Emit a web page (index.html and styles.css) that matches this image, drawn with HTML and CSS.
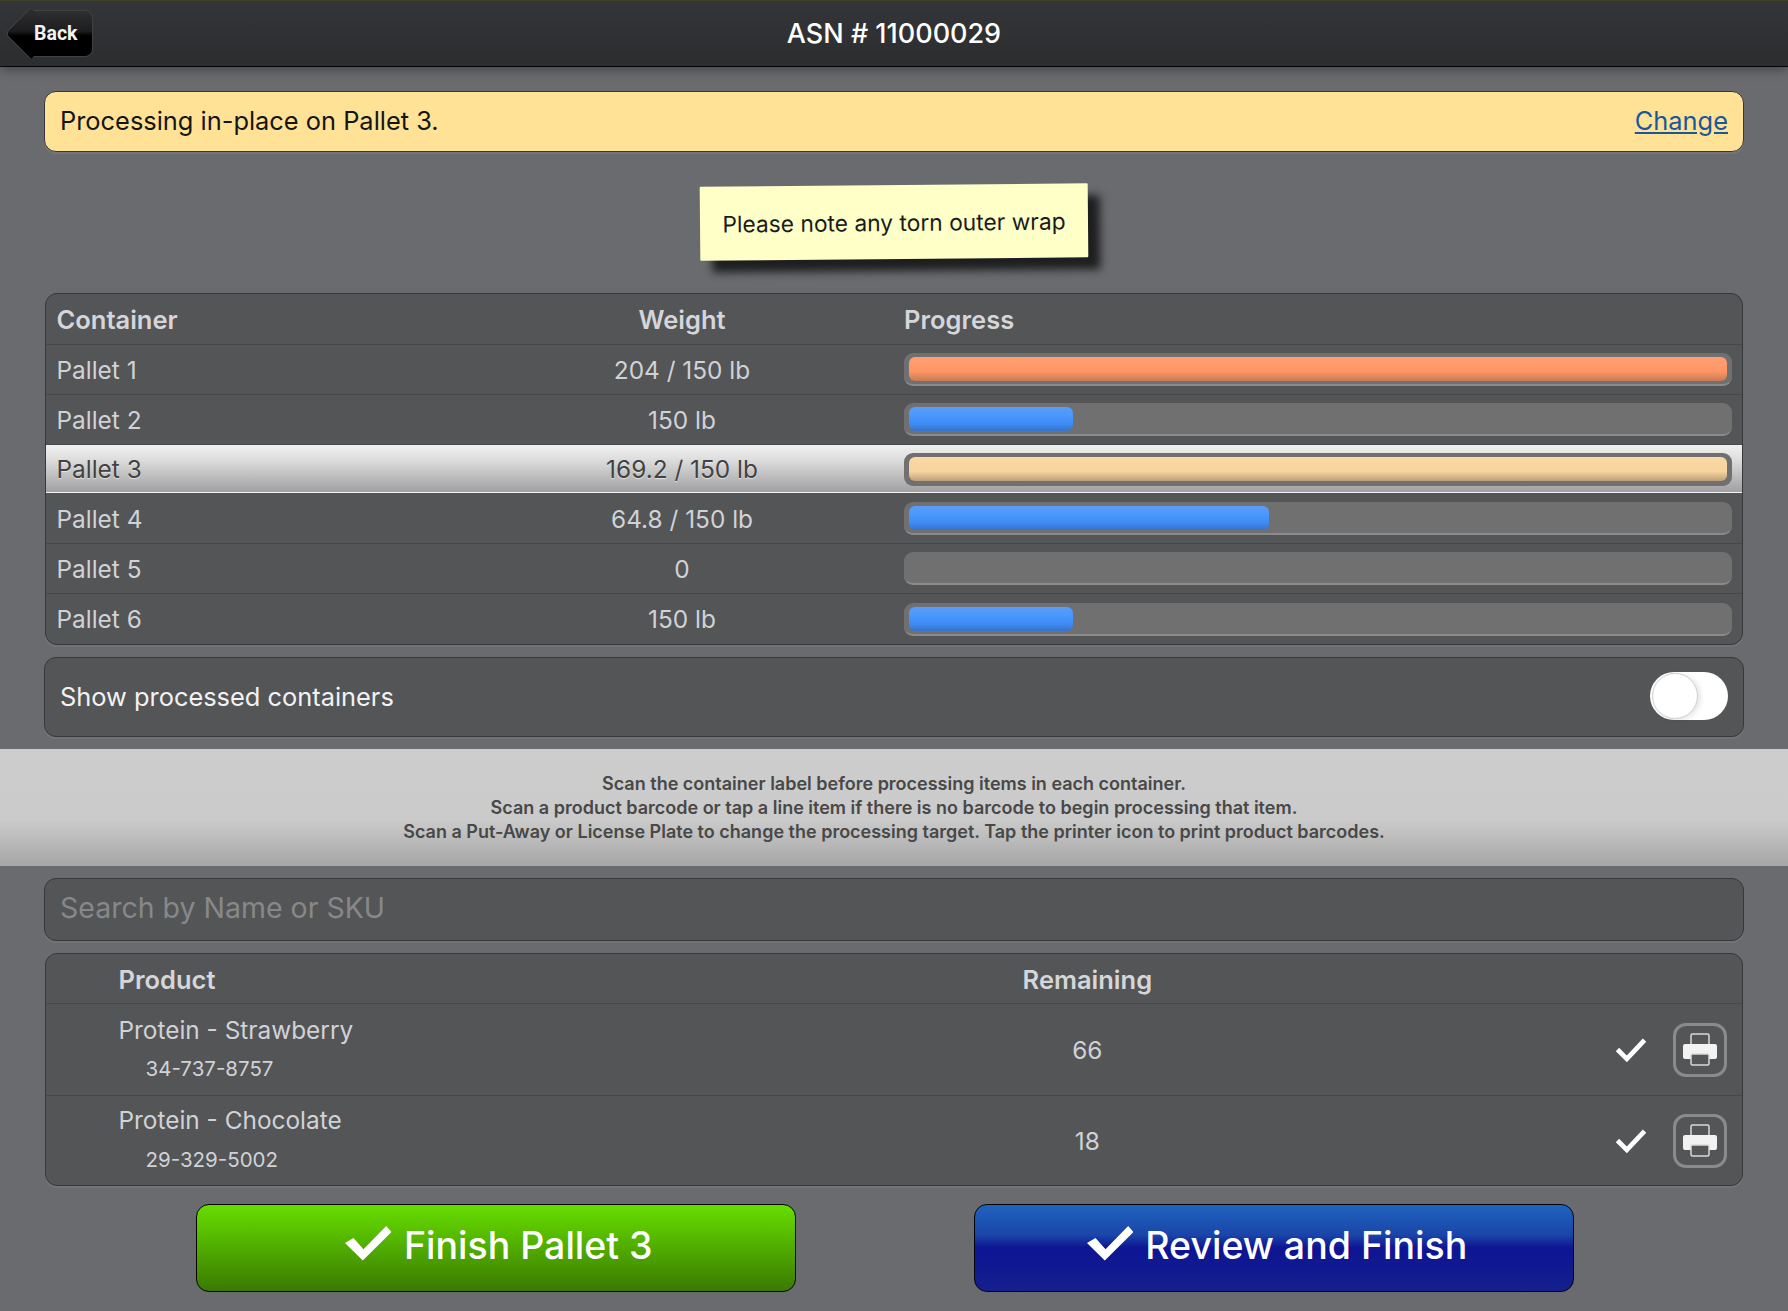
FILE: index.html
```html
<!DOCTYPE html>
<html lang="en">
<head>
<meta charset="utf-8">
<title>ASN # 11000029</title>
<link rel="stylesheet" href="styles.css">
</head>
<body>
<header class="topbar">
  <a class="back" href="#"><span>Back</span></a>
  <h1 class="title">ASN # 11000029</h1>
</header>

<main class="page">
  <div class="panel-wrap">
    <div class="banner">
      <span>Processing in-place on Pallet 3.</span>
      <a class="change" href="#">Change</a>
    </div>
  </div>

  <div class="note-wrap">
    <div class="note">Please note any torn outer wrap</div>
  </div>

  <div class="panel-wrap">
    <section class="table containers">
      <div class="row head"><div>Container</div><div class="center">Weight</div><div>Progress</div></div>
      <div class="row"><div>Pallet 1</div><div class="center">204 / 150 lb</div><div class="track"><div class="fill over" style="width:100%"></div></div></div>
      <div class="row"><div>Pallet 2</div><div class="center">150 lb</div><div class="track"><div class="fill" style="width:20%"></div></div></div>
      <div class="row selected"><div>Pallet 3</div><div class="center">169.2 / 150 lb</div><div class="track"><div class="fill peach" style="width:100%"></div></div></div>
      <div class="row"><div>Pallet 4</div><div class="center">64.8 / 150 lb</div><div class="track"><div class="fill" style="width:44%"></div></div></div>
      <div class="row"><div>Pallet 5</div><div class="center">0</div><div class="track"></div></div>
      <div class="row last"><div>Pallet 6</div><div class="center">150 lb</div><div class="track"><div class="fill" style="width:20%"></div></div></div>
    </section>

    <div class="toggle-card">
      <span>Show processed containers</span>
      <div class="toggle"><div class="knob"></div></div>
    </div>
  </div>

  <div class="info">
    Scan the container label before processing items in each container.<br>
    Scan a product barcode or tap a line item if there is no barcode to begin processing that item.<br>
    Scan a Put-Away or License Plate to change the processing target. Tap the printer icon to print product barcodes.
  </div>

  <div class="panel-wrap">
    <input class="search" type="text" placeholder="Search by Name or SKU">

    <section class="table products">
      <div class="prow head"><div class="pname">Product</div><div class="center">Remaining</div><div></div></div>
      <div class="prow item">
        <div class="pname">Protein - Strawberry<div class="sku">34-737-8757</div></div>
        <div class="center">66</div>
        <div class="actions">
          <svg class="tick" viewBox="0 0 30 24"><path d="M2 12 L11 21 L28 3"/></svg>
          <button class="print" type="button" aria-label="Print">
            <svg viewBox="0 0 34 33"><rect class="paper" x="8" y="1" width="18" height="11" rx="1.5"/><rect class="body" x="0" y="11" width="34" height="15" rx="2"/><rect class="paper tray" x="8" y="21" width="18" height="11" rx="1.5"/></svg>
          </button>
        </div>
      </div>
      <div class="prow item last">
        <div class="pname">Protein - Chocolate<div class="sku">29-329-5002</div></div>
        <div class="center">18</div>
        <div class="actions">
          <svg class="tick" viewBox="0 0 30 24"><path d="M2 12 L11 21 L28 3"/></svg>
          <button class="print" type="button" aria-label="Print">
            <svg viewBox="0 0 34 33"><rect class="paper" x="8" y="1" width="18" height="11" rx="1.5"/><rect class="body" x="0" y="11" width="34" height="15" rx="2"/><rect class="paper tray" x="8" y="21" width="18" height="11" rx="1.5"/></svg>
          </button>
        </div>
      </div>
    </section>
  </div>

  <div class="buttons">
    <button class="cta green" type="button"><svg class="bigtick" viewBox="0 0 46.5 35"><polygon points="0,17 8.5,12 18.5,23.3 41.2,0 46.5,6 17.8,34.6"/></svg>Finish Pallet 3</button>
    <button class="cta blue" type="button"><svg class="bigtick" viewBox="0 0 46.5 35"><polygon points="0,17 8.5,12 18.5,23.3 41.2,0 46.5,6 17.8,34.6"/></svg>Review and Finish</button>
  </div>
</main>
</body>
</html>
```

FILE: styles.css
```css
* { box-sizing: border-box; }
html, body { margin: 0; height: 100%; }
body {
  background: #6a6b6f;
  font-family: Inter, "Liberation Sans", sans-serif;
  color: #d0d2d6;
  overflow: hidden;
}

.topbar {
  position: relative;
  height: 67px;
  display: flex;
  align-items: center;
  justify-content: center;
  background: linear-gradient(#343538, #2c2d2f);
  border-top: 1px solid #3f4026;
  border-bottom: 1px solid #050505;
  box-shadow: 0 3px 10px rgba(0, 0, 0, .35);
}
.title {
  margin: 0;
  font-size: 27px;
  font-weight: 500;
  color: #fff;
}
.back {
  position: absolute;
  left: 31px;
  top: 9px;
  width: 62px;
  height: 47px;
  display: flex;
  align-items: center;
  padding-left: 3px;
  background: linear-gradient(#2e2f31 0%, #1d1d1e 45%, #000 55%, #000 100%);
  border: 1px solid #404144;
  border-left: 0;
  border-radius: 0 8px 8px 0;
  color: #f2f2f2;
  font-family: Roboto, Inter, sans-serif;
  font-size: 19.5px;
  font-weight: 700;
  text-decoration: none;
}
.back::before {
  content: "";
  position: absolute;
  left: -19px;
  top: 4px;
  width: 36px;
  height: 36px;
  transform: rotate(45deg);
  background: linear-gradient(135deg, #2e2f31 0%, #1d1d1e 45%, #000 55%, #000 100%);
  border-left: 1px solid #404144;
  border-bottom: 1px solid #404144;
  border-radius: 0 0 0 6px;
}
.back span { position: relative; }

.panel-wrap { padding: 0 44px; }

.banner {
  margin-top: 24px;
  height: 61px;
  display: flex;
  align-items: center;
  justify-content: space-between;
  padding: 0 15px 2px;
  background: #ffe296;
  border: 1px solid #36373a;
  border-radius: 12px;
  box-shadow: 0 2px 0 rgba(255, 255, 255, .08);
  color: #151515;
  font-size: 25.4px;
}
.change { color: #17589b; }

.note-wrap {
  display: flex;
  justify-content: center;
  margin-top: 33px;
}
.note {
  width: 388px;
  height: 74px;
  display: flex;
  align-items: center;
  justify-content: center;
  background: #ffffc8;
  border-radius: 1px;
  color: #1b1b1b;
  font-size: 22.75px;
  transform: rotate(-.5deg);
  box-shadow: 12px 12px 9px rgba(0, 0, 0, .72);
}

.table {
  margin-left: 1px;
  margin-right: 1px;
  background: #545557;
  border: 1px solid #37383b;
  border-radius: 12px;
  overflow: hidden;
  box-shadow: 0 2px 0 rgba(255, 255, 255, .06);
  font-size: 24.4px;
}
.containers { margin-top: 34px; }
.row {
  display: grid;
  grid-template-columns: 25% 25% 50%;
  align-items: center;
  height: 50px;
  border-bottom: 1px solid #47484a;
}
.row > div:first-child { padding-left: 10.5px; }
.row.head { height: 51px; font-size: 25.5px; font-weight: 600; }
.row.last { border-bottom: 0; }
.head { color: #d4d6da; }
.center { text-align: center; }
.row > div:last-child { margin: 0 10px; }

.track {
  height: 33px;
  padding: 4px 5px;
  background: #707070;
  border-bottom: 2px solid #8b8b8b;
  border-radius: 9px;
}
.fill {
  height: 24px;
  border-radius: 6px;
  background: linear-gradient(#5c9cf7 0%, #4a98fc 35%, #3d8cf5 70%, #3772c8 100%);
}
.fill.over { background: linear-gradient(#ff9f72 0%, #ff9664 60%, #c67a56 100%); }
.fill.peach { background: linear-gradient(#f9d8a4 0%, #f7d49e 60%, #bd9f78 100%); }

.row.selected {
  height: 48px;
  margin-bottom: 1px;
  color: #424242;
  text-shadow: 0 1px 1px rgba(255, 255, 255, .6);
  background: linear-gradient(#f0f0f0 0%, #dedede 30%, #a0a0a2 100%);
  border-bottom: 1px solid #f4f4f4;
}
.row.selected .track { border: 0; margin-top: 1px; padding: 4px 5px; background: #707070; }

.toggle-card {
  margin-top: 12px;
  height: 80px;
  display: flex;
  align-items: center;
  justify-content: space-between;
  padding: 0 15px 2px;
  background: #545557;
  border: 1px solid #37383b;
  border-radius: 12px;
  box-shadow: 0 2px 0 rgba(255, 255, 255, .06);
  color: #f2f2f2;
  font-size: 25.4px;
}
.toggle {
  width: 78px;
  height: 48px;
  padding: 1px 2px;
  background: #fff;
  border-radius: 24px;
}
.knob {
  width: 46px;
  height: 46px;
  background: #fff;
  border: 1px solid #cfcfcf;
  border-radius: 50%;
  box-shadow: 3px 1px 5px rgba(0, 0, 0, .1);
}

.info {
  margin-top: 12px;
  height: 117px;
  padding-top: 23px;
  background: linear-gradient(#cdcdcd 0%, #cbcbcb 60%, #a6a6a6 100%);
  color: #484848;
  font-size: 18px;
  font-weight: 600;
  line-height: 24px;
  text-align: center;
}

.search {
  display: block;
  width: 100%;
  height: 63px;
  margin-top: 12px;
  padding: 0 15px 4px;
  background: #545557;
  border: 1px solid #37383b;
  border-radius: 12px;
  box-shadow: 0 2px 0 rgba(255, 255, 255, .06);
  color: #ddd;
  font-family: inherit;
  font-size: 28.5px;
  outline: none;
}
.search::placeholder { color: #878889; opacity: 1; }

.products { margin-top: 12px; }
.prow {
  display: grid;
  grid-template-columns: 50% 22.8% 27.2%;
  align-items: center;
  border-bottom: 1px solid #47484a;
}
.prow.head { height: 50px; padding-top: 2px; font-size: 25.5px; font-weight: 600; }
.prow.item { height: 92px; }
.prow.last { height: 89px; border-bottom: 0; }
.item .pname { padding-bottom: 4px; }
.pname { padding-left: 72.5px; }
.sku {
  margin-top: 11px;
  padding-left: 27px;
  font-size: 20.5px;
}
.last .sku { margin-top: 12px; }
.actions {
  display: flex;
  align-items: center;
  justify-content: flex-end;
  gap: 26px;
  padding-right: 15px;
}
.tick { width: 32px; height: 25px; }
.tick path { fill: none; stroke: #fff; stroke-width: 4.5; }
.print {
  width: 54px;
  height: 54px;
  padding: 0;
  display: flex;
  align-items: center;
  justify-content: center;
  background: transparent;
  border: 3px solid #8a8b8d;
  border-radius: 13px;
}
.print svg { width: 34px; height: 33px; }
.paper { fill: none; stroke: #d9d9d9; stroke-width: 1.5; }
.paper.tray { fill: #545557; }
.body { fill: #f2f2f2; }

.buttons {
  display: flex;
  justify-content: space-between;
  margin-top: 18px;
  padding: 0 214px 0 196px;
}
.cta {
  width: 600px;
  height: 88px;
  display: flex;
  align-items: center;
  justify-content: center;
  gap: 12px;
  padding: 0 0 6px 6px;
  border: 1px solid #050505;
  border-radius: 13px;
  color: #fff;
  font-family: inherit;
  font-size: 37.5px;
  font-weight: 500;
}
.bigtick { width: 46.5px; height: 35px; margin-top: -3px; fill: #fff; }
.green { background: linear-gradient(#66de00 0%, #3a7a00 100%); }
.blue { background: linear-gradient(#2063bf 0%, #1a45a8 35%, #0e1494 50%, #14208c 100%); }
```
